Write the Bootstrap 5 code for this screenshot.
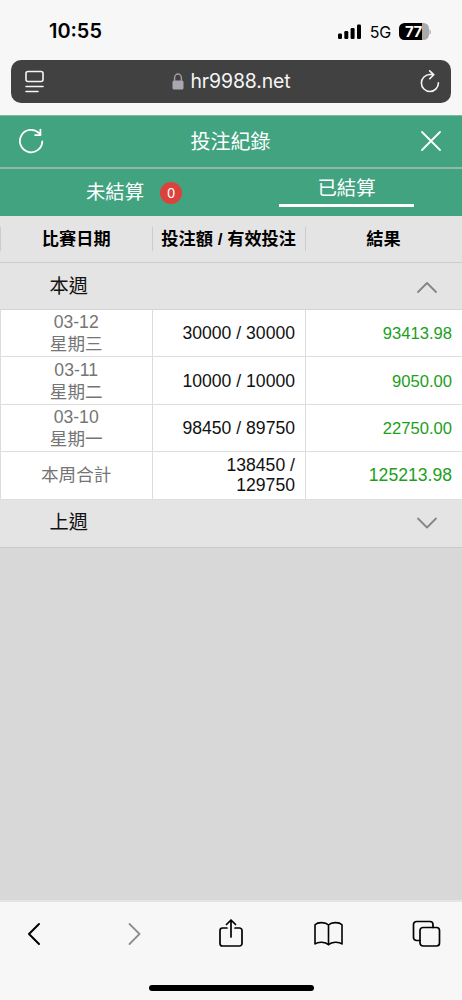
<!DOCTYPE html>
<html lang="zh-Hant">
<head>
<meta charset="utf-8">
<meta name="viewport" content="width=device-width, initial-scale=1">
<title>投注紀錄</title>
<link href="https://cdn.jsdelivr.net/npm/bootstrap@5.3.0/dist/css/bootstrap.min.css" rel="stylesheet">
<style>
body{font-family:"Liberation Sans","Noto Sans CJK TC",sans-serif;background:#d8d8d8;height:1000px;overflow:hidden;color:#111}
svg{display:block;flex:none;fill:none;stroke-linecap:round;stroke-linejoin:round}
.ui-font{font-family:Inter,sans-serif}
.chrome{background:#f7f7f7}
.status{height:60px;padding:3px 30px 0 49px}
.clock{font-size:19.9px;font-weight:600}
.net{font-size:16px;font-weight:400;letter-spacing:-.2px}
.battery{width:30px;height:17px;border-radius:5.5px;background:linear-gradient(90deg,#000 23px,#aaa 23px);color:#fff;font-size:15px;font-weight:700;line-height:17px;padding-left:6px;letter-spacing:-.6px}
.address{height:43px;margin:0 11px 12px;background:#414141;border-radius:10px;padding:0 10px 0 13px;color:#f5f5f5;font-size:19.4px;line-height:45px}
.site{letter-spacing:-.1px;padding-left:6px}
.green{background:#41a380;color:#fff}
.titlebar{height:54px;border-bottom:2px solid #90b9a8;border-top:1px solid #84b8a4;padding:0 20px 2px 18px;font-size:20px}
.titlebar span{padding:2px 3px 0 0}
.tabs{height:47px;font-size:19.4px}
.pending{padding-left:37px}
.count{width:22px;height:22px;font-size:14px;background:#db423c;line-height:22px}
.on{width:135px;height:38px;border-bottom:3.5px solid #fff;line-height:38px}
.cols{display:grid;grid-template-columns:152.4px 152.6px 1fr}
.heads{height:47px;background:#e4e4e4;border-bottom:1px solid #ccc;font-size:17.2px;font-weight:700;color:#000}
.heads>div{height:24px;line-height:24px;margin-top:11px;border-left:1px solid #ccc;text-align:center;white-space:nowrap;padding-right:1px}
.week{height:47px;background:#e4e4e4;padding:1px 24px 0 49.5px;font-size:19.2px}
.week.open{border-bottom:1px solid #d4d4d4;padding-top:2px}
.week.closed{border-bottom:1px solid #c9c9c9;height:48px}
.line{height:47.4px;background:#fff;border-bottom:1px solid #dedede;font-size:17.6px;line-height:20px}
.line>div{border-left:1px solid #dcdcdc;display:flex;align-items:center;justify-content:flex-end;text-align:right;padding-right:10px}
.line>.day{justify-content:center;text-align:center;color:#757575;line-height:22px;padding:0 1px 0 0}
.line>.won{color:#1ba01b;font-size:16.6px;padding-top:2px}
.line>.total{font-size:17.6px;padding-top:0}
.toolbar{height:100px;border-top:2px solid #e4e4e4}
.tools{height:64px;padding:0 20px 0 19px}
.homebar{width:165px;height:6px;background:#000;border-radius:3px;margin-top:19px}
</style>
<script src="https://cdn.jsdelivr.net/npm/bootstrap@5.3.0/dist/js/bootstrap.bundle.min.js"></script>
</head>
<body class="d-flex flex-column">
<header class="chrome ui-font">
  <div class="status d-flex align-items-center justify-content-between text-black">
    <span class="clock">10:55</span>
    <div class="d-flex align-items-center">
      <svg width="24" height="16" viewBox="0 0 24 16" style="fill:#000"><rect x="0" y="9.500" width="4" height="5.500" rx="1.200"/><rect x="6.300" y="7" width="4" height="8" rx="1.200"/><rect x="12.600" y="4" width="4" height="11" rx="1.200"/><rect x="19" y=".5" width="4" height="14.500" rx="1.200"/></svg>
      <span class="net mx-2">5G</span>
      <div class="battery">77</div>
      <svg width="3" height="6" viewBox="0 0 3 6"><path d="M.5 0q3 3 0 6z" style="fill:#aaa"/></svg>
    </div>
  </div>
  <div class="address d-flex align-items-center justify-content-between">
    <svg width="20" height="24" viewBox="0 0 20 24" stroke="#f5f5f5" stroke-width="1.6"><rect x="2" y="1.500" width="17" height="10" rx="2"/><path d="M2 16.500h17M2 21.500h12"/></svg>
    <div class="d-flex align-items-center">
      <svg width="12" height="18" viewBox="0 0 12 18"><rect x=".5" y="7.500" width="11" height="9" rx="1.500" style="fill:#a9a8b0"/><path d="M2.600 7.500V4.800a3.400 3.800 0 0 1 6.800 0v2.700" stroke="#a09fa6" stroke-width="1.400"/></svg>
      <span class="site">hr9988.net</span>
    </div>
    <svg width="22" height="24" viewBox="0 0 22 24" stroke="#f5f5f5" stroke-width="1.6"><path d="M19.400 12.800a8.500 8.500 0 1 1-8.400-8.300h3.800M10.700.9l4 3.800-4 4"/></svg>
  </div>
</header>
<div class="green titlebar d-flex align-items-center justify-content-between">
  <svg width="26" height="26" viewBox="0 0 26 26" stroke="#fff" stroke-width="1.8"><path d="M24.300 13.400A11.200 11.200 0 1 1 21 5.100l1.600 1.700M22.400 1.600v5.500h-5.300"/></svg>
  <span>投注紀錄</span>
  <svg width="22" height="22" viewBox="0 0 22 22" stroke="#fff" stroke-width="1.8"><path d="M2 2l18 18M20 2L2 20"/></svg>
</div>
<nav class="green tabs row g-0">
  <div class="col-6 d-flex align-items-center justify-content-center pending"><span>未結算</span><span class="count rounded-circle text-center ms-3">0</span></div>
  <div class="col-6 d-flex justify-content-center"><div class="on text-center">已結算</div></div>
</nav>
<main class="flex-grow-1">
  <div class="heads cols"><div>比賽日期</div><div>投注額 / 有效投注</div><div>結果</div></div>
  <div class="week open d-flex align-items-center justify-content-between"><span>本週</span><svg width="22" height="13" viewBox="0 0 22 13" stroke="#858585" stroke-width="1.8"><path d="M2 11l9-9 9 9"/></svg></div>
  <div class="line cols"><div class="day">03-12<br>星期三</div><div>30000 / 30000</div><div class="won">93413.98</div></div>
  <div class="line cols"><div class="day">03-11<br>星期二</div><div>10000 / 10000</div><div class="won">9050.00</div></div>
  <div class="line cols"><div class="day">03-10<br>星期一</div><div>98450 / 89750</div><div class="won">22750.00</div></div>
  <div class="line cols"><div class="day">本周合計</div><div>138450 /<br>129750</div><div class="won total">125213.98</div></div>
  <div class="week closed d-flex align-items-center justify-content-between"><span>上週</span><svg width="22" height="13" viewBox="0 0 22 13" stroke="#858585" stroke-width="1.8"><path d="M2 1.500l9 9 9-9"/></svg></div>
</main>
<footer class="chrome toolbar">
  <div class="tools d-flex align-items-center justify-content-between">
    <svg width="30" height="30" viewBox="0 0 30 30" stroke="#000" stroke-width="2"><path d="M20 5L10 15l10 10"/></svg>
    <svg width="30" height="30" viewBox="0 0 30 30" stroke="#8e8e8e" stroke-width="1.8"><path d="M12.500 5l10 10-10 10"/></svg>
    <svg width="30" height="30" viewBox="0 0 30 30" stroke="#000" stroke-width="1.7"><path d="M11 9H6.500A2.500 2.500 0 0 0 4 11.500v13A2.500 2.500 0 0 0 6.500 27h17a2.500 2.500 0 0 0 2.500-2.500v-13A2.500 2.500 0 0 0 23.500 9H19M15 18V1.500M10.500 5.500L15 1l4.500 4.500"/></svg>
    <svg width="30" height="30" viewBox="0 0 30 30" stroke="#000" stroke-width="1.600"><path d="M14.500 6C11.500 3 4 2.700 1 5.700V25c3-2.400 10.500-2.400 13.500.8 3-3.200 10.500-3.200 13.500-.8V5.700c-3-3-10.500-2.700-13.500.3zM14.500 6v19.800"/></svg>
    <svg width="30" height="30" viewBox="0 0 30 30" stroke="#000" stroke-width="1.700"><rect x="8" y="8.500" width="19.500" height="18.500" rx="3"/><path d="M8 21.500H4.500a3 3 0 0 1-3-3V5.500a3 3 0 0 1 3-3h13.500a3 3 0 0 1 3 3v3"/></svg>
  </div>
  <div class="homebar mx-auto"></div>
</footer>
</body>
</html>
